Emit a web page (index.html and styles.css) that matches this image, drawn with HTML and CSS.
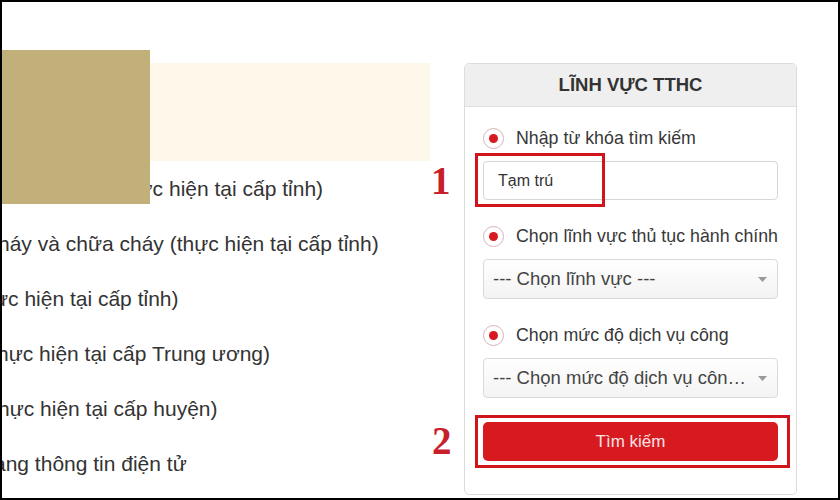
FILE: index.html
```html
<!DOCTYPE html>
<html lang="vi">
<head>
<meta charset="utf-8">
<title>Lĩnh vực TTHC</title>
<link rel="stylesheet" href="styles.css">
</head>
<body>
<div class="frame">
  <div class="left">
    <div class="banner"></div>
    <ul class="list">
      <li class="l1">Đăng ký tạm trú (thực hiện tại cấp tỉnh)</li>
      <li class="l2">háy và chữa cháy (thực hiện tại cấp tỉnh)</li>
      <li class="l3">ực hiện tại cấp tỉnh)</li>
      <li class="l4">hực hiện tại cấp Trung ương)</li>
      <li class="l5">hực hiện tại cấp huyện)</li>
      <li class="l6">ang thông tin điện tử</li>
    </ul>
    <div class="redact"></div>
  </div>

  <div class="panel">
    <div class="panel-head">LĨNH VỰC TTHC</div>
    <div class="panel-body">
      <div class="radio-row">
        <span class="radio"></span><span class="label">Nhập từ khóa tìm kiếm</span>
      </div>
      <div class="field">
        <div class="input">Tạm trú</div>
        <div class="mark mark-input"></div>
      </div>

      <div class="radio-row">
        <span class="radio"></span><span class="label">Chọn lĩnh vực thủ tục hành chính</span>
      </div>
      <div class="field">
        <div class="select"><span class="sel-text">--- Chọn lĩnh vực ---</span>
          <svg class="caret" width="9" height="5" viewBox="0 0 9 5"><path d="M0 0h9L4.5 5z" fill="#999"/></svg>
        </div>
      </div>

      <div class="radio-row">
        <span class="radio"></span><span class="label">Chọn mức độ dịch vụ công</span>
      </div>
      <div class="field">
        <div class="select"><span class="sel-text">--- Chọn mức độ dịch vụ công ---</span>
          <svg class="caret" width="9" height="5" viewBox="0 0 9 5"><path d="M0 0h9L4.5 5z" fill="#999"/></svg>
        </div>
      </div>

      <div class="field btn-field">
        <div class="btn">Tìm kiếm</div>
        <div class="mark mark-btn"></div>
      </div>
    </div>
  </div>

  <div class="num num1">1</div>
  <div class="num num2">2</div>
</div>
</body>
</html>
```

FILE: styles.css
```css
* { box-sizing: border-box; }
html, body { margin: 0; padding: 0; background: #fff; }
body { font-family: "Liberation Sans", Arial, sans-serif; color: #333; }

.frame {
  position: relative;
  width: 840px;
  height: 500px;
  border: 2px solid #000;
  display: flex;
  align-items: flex-start;
  overflow: hidden;
  background: #fff;
}

.left {
  position: relative;
  width: 428px;
  flex: none;
  overflow: hidden;
  height: 100%;
}
.banner {
  margin-top: 61px;
  height: 98px;
  background: #fdf8ea;
}
.list {
  list-style: none;
  margin: 0;
  padding: 0;
  font-size: 21px;
  line-height: 55px;
  white-space: nowrap;
  color: #333;
}
.l1 { margin-left: -42px; }
.l2 { margin-left: -4px; }
.l3 { margin-left: -8px; }
.l4 { margin-left: -5px; }
.l5 { margin-left: -4px; }
.l6 { margin-left: -8px; }

.redact {
  position: absolute;
  left: 0;
  top: 48px;
  width: 148px;
  height: 154px;
  background: #c2b07a;
}

.panel {
  flex: none;
  margin-left: 34px;
  margin-top: 61px;
  width: 333px;
  height: 432px;
  border: 1px solid #dcdcdc;
  border-radius: 5px;
  background: #fff;
}
.panel-head {
  height: 43px;
  background: #efefef;
  border-bottom: 1px solid #e0e0e0;
  border-radius: 4px 4px 0 0;
  display: flex;
  align-items: center;
  justify-content: center;
  font-weight: bold;
  font-size: 18.5px;
  color: #333;
}
.panel-body {
  padding: 19px 18px 0;
}
.radio-row {
  height: 24px;
  display: flex;
  align-items: center;
  gap: 12px;
  margin-bottom: 11px;
}
.radio {
  width: 21px;
  height: 21px;
  border-radius: 50%;
  border: 1.5px solid #d6b3b5;
  display: flex;
  align-items: center;
  justify-content: center;
  flex: none;
}
.radio::after {
  content: "";
  width: 9px;
  height: 9px;
  border-radius: 50%;
  background: #d71920;
}
.label {
  font-size: 17.8px;
  color: #383838;
}
.field {
  position: relative;
  margin-bottom: 24px;
}
.input {
  height: 39px;
  border: 1px solid #d6d6d6;
  border-radius: 4px;
  padding-left: 14px;
  display: flex;
  align-items: center;
  font-size: 16px;
  color: #333;
}
.select {
  height: 40px;
  border: 1px solid #dadada;
  border-radius: 4px;
  background: linear-gradient(#fff, #f3f3f3);
  display: flex;
  align-items: center;
  padding: 0 10px 0 9px;
  gap: 10px;
  font-size: 18.5px;
  color: #444;
}
.sel-text {
  flex: 1;
  min-width: 0;
  overflow: hidden;
  text-overflow: ellipsis;
  white-space: nowrap;
}
.caret { flex: none; }
.btn {
  height: 39px;
  border-radius: 5px;
  background: #d71920;
  color: #fbe3e3;
  display: flex;
  align-items: center;
  justify-content: center;
  font-size: 17px;
}
.mark {
  position: absolute;
  border: 3px solid #d0141b;
  pointer-events: none;
}
.mark-input {
  left: -8px;
  top: -8px;
  width: 130px;
  height: 54px;
}
.mark-btn {
  left: -8px;
  top: -7px;
  width: 315px;
  height: 53px;
}

.num {
  position: absolute;
  font-family: "Liberation Serif", "Times New Roman", serif;
  font-weight: bold;
  font-size: 39px;
  line-height: 1;
  color: #c8202a;
}
.num1 { left: 429px; top: 159px; }
.num2 { left: 430px; top: 419px; }
```
